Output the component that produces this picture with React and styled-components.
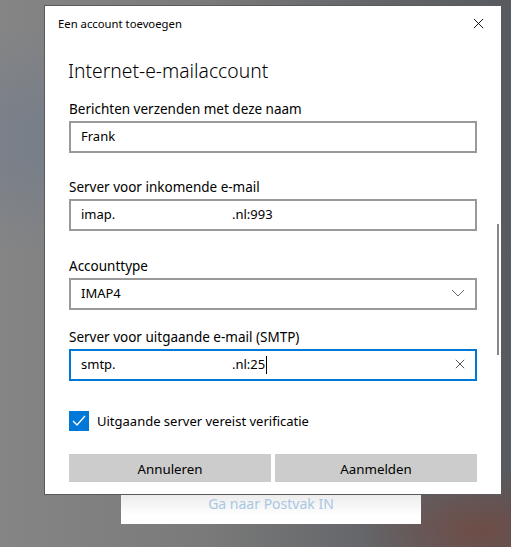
import React from 'react';
import styled, { createGlobalStyle } from 'styled-components';

const GlobalStyle = createGlobalStyle`
  html, body {
    margin: 0;
    padding: 0;
  }
  body {
    font-family: "Noto Sans", "Open Sans", Arial, sans-serif;
    color: #000;
  }
`;

const Backdrop = styled.div`
  width: 511px;
  height: 547px;
  overflow: hidden;
  display: flex;
  flex-direction: column;
  background:
    radial-gradient(ellipse 120px 60px at 480px 530px, rgba(120, 70, 60, 0.7), transparent),
    radial-gradient(ellipse 200px 120px at 60px 140px, rgba(115, 125, 140, 0.8), transparent),
    linear-gradient(90deg, #858585 0%, #7a7a7a 40%, #626468 75%, #575a5e 100%);
`;

const Dialog = styled.div`
  margin: 5px 0 0 44px;
  width: 456px;
  height: 488px;
  background: #fff;
  border: 1px solid #5a5a5a;
  display: flex;
  flex-direction: column;
  position: relative;
`;

const TitleBar = styled.div`
  height: 34px;
  display: flex;
  align-items: center;
  justify-content: space-between;
  padding: 0 17px 0 13px;
  font-size: 11.3px;
`;

const CloseButton = styled.button`
  border: none;
  background: none;
  padding: 0;
  width: 12px;
  height: 12px;
  display: flex;
  align-items: center;
  justify-content: center;
`;

const Body = styled.div`
  padding: 17px 24px 0 24px;
  display: flex;
  flex-direction: column;
`;

const Heading = styled.h1`
  margin: 0 0 15px -1px;
  font-size: 19.3px;
  font-weight: 300;
  line-height: 27px;
`;

const Field = styled.div`
  display: flex;
  flex-direction: column;
  margin-bottom: ${(p) => p.$gap}px;
`;

const Label = styled.label`
  font-size: 13.5px;
  line-height: 20px;
  margin-bottom: 2px;
`;

const InputBox = styled.div`
  border: 2px solid ${(p) => (p.$focus ? '#0078d7' : '#999')};
  display: flex;
  align-items: center;
  padding: 0 10px 2px 10px;
  height: 26px;
  font-size: 13px;
`;

const Value = styled.span`
  white-space: pre;
`;

/* host prefix; the middle of the domain is blanked out in the screenshot */
const Host = styled.span`
  display: inline-block;
  width: 151px;
`;

const Caret = styled.span`
  display: inline-block;
  width: 1px;
  height: 18px;
  background: #000;
  margin-left: 1px;
  margin-top: 2px;
`;

const Spacer = styled.div`
  flex: 1;
`;

const CheckRow = styled.div`
  display: flex;
  align-items: center;
  gap: 8px;
  height: 20px;
  font-size: 13px;
  margin-top: 30px;
`;

const CheckBox = styled.div`
  width: 20px;
  height: 20px;
  background: #0078d7;
  display: flex;
  align-items: center;
  justify-content: center;
`;

const Buttons = styled.div`
  display: grid;
  grid-template-columns: 1fr 1fr;
  gap: 4px;
  margin-top: 23px;
`;

const Button = styled.button`
  height: 28px;
  border: none;
  background: #cccccc;
  font-family: inherit;
  font-size: 13.3px;
  color: #000;
  padding: 2px 0 0 0;
`;

const Scrollbar = styled.div`
  position: absolute;
  right: 2px;
  top: 218px;
  width: 2px;
  height: 131px;
  background: #888;
`;

const InboxCard = styled.div`
  margin-left: 121px;
  width: 300px;
  height: 29px;
  background: linear-gradient(#ececec, #fff 70%);
  color: #a9c7e4;
  font-size: 14px;
  text-align: center;
  line-height: 18px;
`;

const XIcon = ({ size = 12, color = '#000', w = 1 }) => (
  <svg width={size} height={size} viewBox="0 0 12 12">
    <path d="M1 1 L11 11 M11 1 L1 11" stroke={color} strokeWidth={w} fill="none" />
  </svg>
);

export default function App() {
  return (
    <>
      <GlobalStyle />
      <Backdrop>
        <Dialog>
          <TitleBar>
            <span>Een account toevoegen</span>
            <CloseButton>
              <XIcon size={11} />
            </CloseButton>
          </TitleBar>
          <Body>
            <Heading>Internet-e-mailaccount</Heading>
            <Field $gap={24}>
              <Label>Berichten verzenden met deze naam</Label>
              <InputBox>
                <Value>Frank</Value>
              </InputBox>
            </Field>
            <Field $gap={25}>
              <Label>Server voor inkomende e-mail</Label>
              <InputBox>
                <Value>
                  <Host>imap.</Host>.nl:993
                </Value>
              </InputBox>
            </Field>
            <Field $gap={17}>
              <Label>Accounttype</Label>
              <InputBox>
                <Value>IMAP4</Value>
                <Spacer />
                <svg width="14" height="8" viewBox="0 0 14 8">
                  <path d="M1 1 L7 7 L13 1" stroke="#666" strokeWidth="1" fill="none" />
                </svg>
              </InputBox>
            </Field>
            <Field $gap={0}>
              <Label>Server voor uitgaande e-mail (SMTP)</Label>
              <InputBox $focus>
                <Value>
                  <Host>smtp.</Host>.nl:25
                </Value>
                <Caret />
                <Spacer />
                <XIcon size={10} color="#333" />
              </InputBox>
            </Field>
            <CheckRow>
              <CheckBox>
                <svg width="14" height="12" viewBox="0 0 14 12">
                  <path d="M1 6 L5 10 L13 1" stroke="#fff" strokeWidth="1.4" fill="none" />
                </svg>
              </CheckBox>
              <span>Uitgaande server vereist verificatie</span>
            </CheckRow>
            <Buttons>
              <Button>Annuleren</Button>
              <Button>Aanmelden</Button>
            </Buttons>
          </Body>
          <Scrollbar />
        </Dialog>
        <InboxCard>Ga naar Postvak IN</InboxCard>
      </Backdrop>
    </>
  );
}
